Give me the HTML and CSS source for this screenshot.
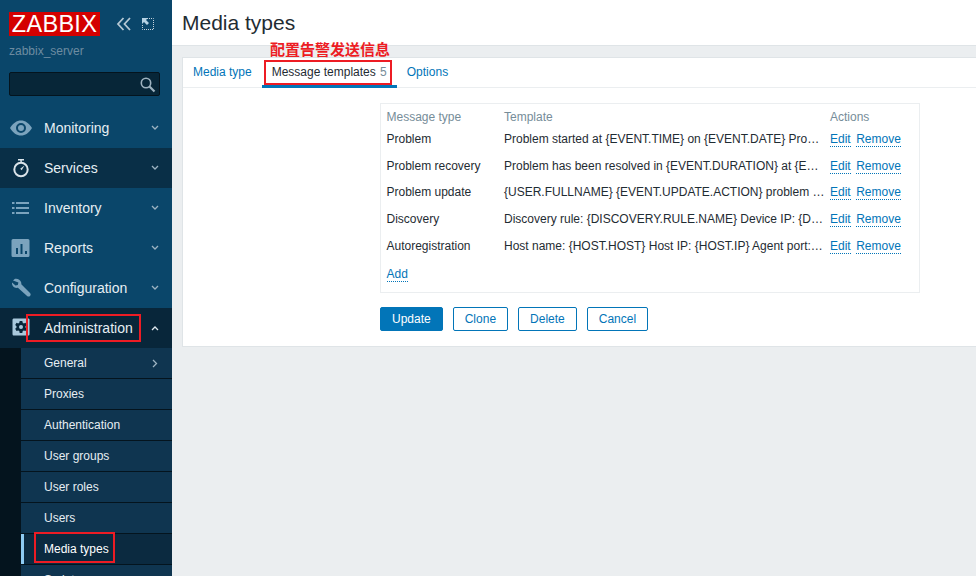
FILE: index.html
```html
<!DOCTYPE html>
<html lang="en">
<head>
    <meta charset="UTF-8">
    <title>Media types</title>
    <link rel="stylesheet" href="styles.css">
</head>
<body>

<aside class="sidebar">
    <div class="brand">
        <span class="logo">ZABBIX</span>
        <svg class="brand-icon collapse-icon" width="16" height="14" viewBox="0 0 16 14"><path d="M7.500 1 2 7l5.500 6M14 1 8.500 7l5.500 6" fill="none" stroke="#b5c8d4" stroke-width="1.800"/></svg>
        <svg class="brand-icon" width="14" height="14" viewBox="0 0 14 14"><path d="M6 1.500h6.500v11h-11V7" fill="none" stroke="#c5d3dc" stroke-dasharray="1 1"/><path d="M1 1h6L5 3l3 3-2 2-3-3-2 2z" fill="#b5d2e4"/></svg>
    </div>
    <div class="server">zabbix_server</div>
    <div class="search">
        <svg width="17" height="17" viewBox="0 0 17 17"><circle cx="7" cy="7" r="4.700" fill="none" stroke="#9fb3c0" stroke-width="1.600"/><path d="m10.500 10.500 5 5" stroke="#9fb3c0" stroke-width="2.200"/></svg>
    </div>

    <nav>
        <a class="nav-item">
            <svg class="nav-icon" width="24" height="24" viewBox="0 0 24 24"><path fill-rule="evenodd" d="M1 12c3-5 6.800-7.500 11-7.500S20 7 23 12c-3 5-6.800 7.500-11 7.500S4 17 1 12zm11-5a5 5 0 1 0 0 10 5 5 0 0 0 0-10zm0 2a3 3 0 1 1 0 6 3 3 0 0 1 0-6z"/></svg>
            <span class="nav-label">Monitoring</span>
            <svg class="chevron" width="8" height="6" viewBox="0 0 8 6"><path d="m1 1 3 3 3-3"/></svg>
        </a>
        <a class="nav-item is-dark">
            <svg class="nav-icon is-light" width="24" height="24" viewBox="0 0 24 24"><path d="M9 3h6v1.500H9z"/><path d="M11.200 4h1.600v2.500h-1.200z"/><circle cx="12" cy="13.500" r="6.700" fill="none" stroke="#dbe4ea" stroke-width="2"/><path d="m15.500 9.500-4.300 3.200 1.500 1.500z"/></svg>
            <span class="nav-label">Services</span>
            <svg class="chevron" width="8" height="6" viewBox="0 0 8 6"><path d="m1 1 3 3 3-3"/></svg>
        </a>
        <a class="nav-item">
            <svg class="nav-icon" width="24" height="24" viewBox="0 0 24 24"><path d="M3 6h2.500v2H3zm4 0h13v2H7zM3 11h2.500v2H3zm4 0h13v2H7zM3 16h2.500v2H3zm4 0h13v2H7z"/></svg>
            <span class="nav-label">Inventory</span>
            <svg class="chevron" width="8" height="6" viewBox="0 0 8 6"><path d="m1 1 3 3 3-3"/></svg>
        </a>
        <a class="nav-item">
            <svg class="nav-icon" width="24" height="24" viewBox="0 0 24 24"><path fill-rule="evenodd" d="M4 3h15a1.500 1.500 0 0 1 1.500 1.500v15A1.500 1.500 0 0 1 19 21H4a1.500 1.500 0 0 1-1.500-1.500v-15A1.500 1.500 0 0 1 4 3zm3 9v6h2v-6zm4.500-4v10h2V8zm4.500 7v3h2v-3z"/></svg>
            <span class="nav-label">Reports</span>
            <svg class="chevron" width="8" height="6" viewBox="0 0 8 6"><path d="m1 1 3 3 3-3"/></svg>
        </a>
        <a class="nav-item">
            <svg class="nav-icon" width="24" height="24" viewBox="0 0 24 24"><path d="M4 4.500 6 2.800c2.600-.6 5.200.8 6 3.300.3.700.4 1.400.3 2.100l8.700 8.800c.9.900.9 2.200 0 3-.8.800-2.100.8-2.900 0l-9.200-8.200c-2.400.4-4.800-.7-5.600-2.900-.3-.8-.4-1.600-.3-2.400l3.500 3 2.300-.6.600-2.300z"/></svg>
            <span class="nav-label">Configuration</span>
            <svg class="chevron" width="8" height="6" viewBox="0 0 8 6"><path d="m1 1 3 3 3-3"/></svg>
        </a>
        <a class="nav-item is-open">
            <svg class="nav-icon is-pale" width="24" height="24" viewBox="0 0 24 24"><path d="M5 2.500h14c1 0 1.500.5 1.500 1.500v14c0 1-.5 1.500-1.500 1.500H5c-1 0-1.500-.5-1.500-1.500V4c0-1 .5-1.500 1.500-1.500z"/><path class="gear" transform="translate(.7 -1)" d="M10 6l-.4 1.800-1.100.6-1.700-.6-1.300 2.300 1.300 1.200v1.300L5.500 13.800l1.300 2.300 1.700-.6 1.100.6.4 1.900h2.600l.4-1.900 1.100-.6 1.700.6 1.300-2.300-1.300-1.200v-1.300l1.300-1.200-1.300-2.300-1.700.6-1.100-.6L12.600 6z"/><circle cx="12" cy="11" r="2"/></svg>
            <span class="nav-label">Administration</span>
            <svg class="chevron is-up" width="8" height="6" viewBox="0 0 8 6"><path d="m1 5 3-3 3 3"/></svg>
        </a>
        <div class="submenu">
            <a class="sub-item">General<svg class="sub-arrow" width="6" height="9" viewBox="0 0 6 9"><path d="m1 1 3.500 3.500L1 8"/></svg></a>
            <a class="sub-item">Proxies</a>
            <a class="sub-item">Authentication</a>
            <a class="sub-item">User groups</a>
            <a class="sub-item">User roles</a>
            <a class="sub-item">Users</a>
            <a class="sub-item is-current">Media types</a>
            <a class="sub-item">Scripts</a>
        </div>
    </nav>
</aside>

<main class="main">
    <header class="page-title">
        <h1>Media types</h1>
    </header>

    <section class="card">
        <div class="tabs">
            <a class="tab">Media type</a>
            <a class="tab is-active">Message templates <span class="count">5</span></a>
            <a class="tab">Options</a>
        </div>

        <div class="form-body">
            <div class="templates">
                <table>
                    <thead>
                        <tr>
                            <th class="col-type">Message type</th>
                            <th class="col-template">Template</th>
                            <th>Actions</th>
                        </tr>
                    </thead>
                    <tbody>
                        <tr>
                            <td>Problem</td>
                            <td>Problem started at {EVENT.TIME} on {EVENT.DATE} Pro…</td>
                            <td><a class="link">Edit</a><a class="link">Remove</a></td>
                        </tr>
                        <tr>
                            <td>Problem recovery</td>
                            <td>Problem has been resolved in {EVENT.DURATION} at {E…</td>
                            <td><a class="link">Edit</a><a class="link">Remove</a></td>
                        </tr>
                        <tr>
                            <td>Problem update</td>
                            <td>{USER.FULLNAME} {EVENT.UPDATE.ACTION} problem …</td>
                            <td><a class="link">Edit</a><a class="link">Remove</a></td>
                        </tr>
                        <tr>
                            <td>Discovery</td>
                            <td>Discovery rule: {DISCOVERY.RULE.NAME} Device IP: {D…</td>
                            <td><a class="link">Edit</a><a class="link">Remove</a></td>
                        </tr>
                        <tr>
                            <td>Autoregistration</td>
                            <td>Host name: {HOST.HOST} Host IP: {HOST.IP} Agent port:…</td>
                            <td><a class="link">Edit</a><a class="link">Remove</a></td>
                        </tr>
                        <tr>
                            <td class="add-cell" colspan="3"><a class="link">Add</a></td>
                        </tr>
                    </tbody>
                </table>
            </div>

            <div class="buttons">
                <button class="btn is-primary">Update</button>
                <button class="btn">Clone</button>
                <button class="btn">Delete</button>
                <button class="btn">Cancel</button>
            </div>
        </div>
    </section>
</main>

<!-- red marks drawn over the screenshot -->
<div class="mark mark-admin"></div>
<div class="mark mark-media"></div>
<div class="mark mark-tab"></div>
<div class="mark-text">配置告警发送信息</div>

</body>
</html>
```

FILE: styles.css
```css
html, body {
    height: 100%;
}
body {
    margin: 0;
    height: 576px;
    overflow: hidden;
    display: flex;
    position: relative;
    font-family: "Liberation Sans", Arial, sans-serif;
    font-size: 12px;
    color: #1f2c33;
    background-color: #ebeef0;
}

/* sidebar */
.sidebar {
    width: 172px;
    flex: none;
    background-color: #0a466a;
    overflow: hidden;
}
.brand {
    display: flex;
    align-items: center;
    height: 24px;
    padding: 12px 0 0 9px;
}
.logo {
    width: 91px;
    height: 24px;
    background-color: #d40000;
    color: #fff;
    font-size: 23.500px;
    line-height: 25px;
    letter-spacing: 0.300px;
    text-align: center;
    margin-right: 16px;
}
.brand-icon {
    margin-right: 11px;
}
.collapse-icon {
    margin-right: 9px;
}
.server {
    padding: 8px 0 0 9px;
    height: 16px;
    line-height: 14px;
    color: #6d8ca1;
    font-size: 12px;
}
.search {
    margin: 12px 12px 0 9px;
    height: 22px;
    background-color: #072638;
    border: 1px solid #04141e;
    border-radius: 2px;
    display: flex;
    justify-content: flex-end;
    align-items: center;
    padding-right: 3px;
}
nav {
    margin-top: 12px;
}
.nav-item {
    display: flex;
    align-items: center;
    height: 40px;
    color: #e6eef3;
    font-size: 14px;
}
.nav-item.is-dark {
    background-color: #092f47;
}
.nav-item.is-open {
    background-color: #08263a;
}
.nav-icon {
    width: 24px;
    margin-left: 9px;
    fill: #7ba3bd;
}
.nav-icon.is-light {
    fill: #dbe4ea;
}
.nav-icon.is-pale {
    fill: #a9c8dc;
}
.nav-icon .gear {
    fill: #08263a;
}
.nav-label {
    margin-left: 11px;
    flex: 1;
}
.chevron {
    margin-right: 13px;
    fill: none;
    stroke: #9db3c2;
    stroke-width: 1.300;
}
.chevron.is-up {
    stroke: #dfe8ee;
}
.submenu {
    background-color: #04141e;
    padding-left: 21px;
}
.sub-item {
    display: flex;
    align-items: center;
    justify-content: space-between;
    height: 30px;
    padding: 0 14px 0 23px;
    background-color: #0f3550;
    border-bottom: 1px solid #04141e;
    color: #e6eef3;
}
.sub-item.is-current {
    background-color: #0b2a40;
    box-shadow: inset 3px 0 0 #8ecbf2;
    color: #fff;
}
.sub-arrow {
    fill: none;
    stroke: #9db3c2;
    stroke-width: 1.300;
}

/* content */
.main {
    flex: 1;
    min-width: 0;
}
.page-title {
    height: 45px;
    background-color: #fff;
    border-bottom: 1px solid #dfe4e7;
}
h1 {
    margin: 0;
    padding-left: 10px;
    font-size: 21px;
    font-weight: normal;
    line-height: 46px;
    color: #1f2c33;
}
.card {
    margin: 11px 0 0 10px;
    height: 288px;
    background-color: #fff;
    border: 1px solid #dfe4e7;
    border-right: 0;
}
.tabs {
    display: flex;
    height: 29px;
    border-bottom: 1px solid #ebeef0;
}
.tab {
    height: 30px;
    line-height: 29px;
    padding: 0 10px;
    color: #0275b8;
    box-sizing: border-box;
}
.tab.is-active {
    color: #1f2c33;
    border-bottom: 3px solid #0275b8;
}
.count {
    color: #768d99;
    margin-left: 1px;
}
.form-body {
    padding: 15px 0 0 197px;
}
.templates {
    width: 538px;
    height: 188px;
    border: 1px solid #ebeef0;
}
table {
    border-collapse: collapse;
    table-layout: fixed;
    width: 100%;
}
th {
    font-weight: normal;
    text-align: left;
    color: #768d99;
    height: 17.500px;
    padding: 4px 0 0 5.500px;
}
td {
    height: 26.700px;
    padding: 0 0 0 5.500px;
    white-space: nowrap;
}
td.add-cell {
    padding-top: 2px;
}
.col-type {
    width: 112px;
}
.col-template {
    width: 320.500px;
}
.link {
    color: #0275b8;
    border-bottom: 1px dotted #0275b8;
    margin-right: 5.500px;
}
.buttons {
    display: flex;
    gap: 10px;
    margin-top: 14px;
}
.btn {
    height: 24px;
    padding: 0 11px;
    background-color: #fff;
    border: 1px solid #0275b8;
    border-radius: 2px;
    color: #0275b8;
    font-family: inherit;
    font-size: 12px;
}
.btn.is-primary {
    background-color: #0275b8;
    color: #fff;
}

/* annotations */
.mark {
    position: absolute;
    border: 2px solid #ed1c24;
    box-sizing: border-box;
}
.mark-admin {
    left: 26px;
    top: 314px;
    width: 115px;
    height: 28px;
}
.mark-media {
    left: 34px;
    top: 532px;
    width: 81px;
    height: 31px;
}
.mark-tab {
    left: 264px;
    top: 60px;
    width: 128px;
    height: 25px;
}
.mark-text {
    position: absolute;
    left: 270px;
    top: 40px;
    color: #ed1c24;
    font-family: "Noto Sans CJK SC", sans-serif;
    font-size: 15px;
    font-weight: bold;
    line-height: 18px;
}
```
